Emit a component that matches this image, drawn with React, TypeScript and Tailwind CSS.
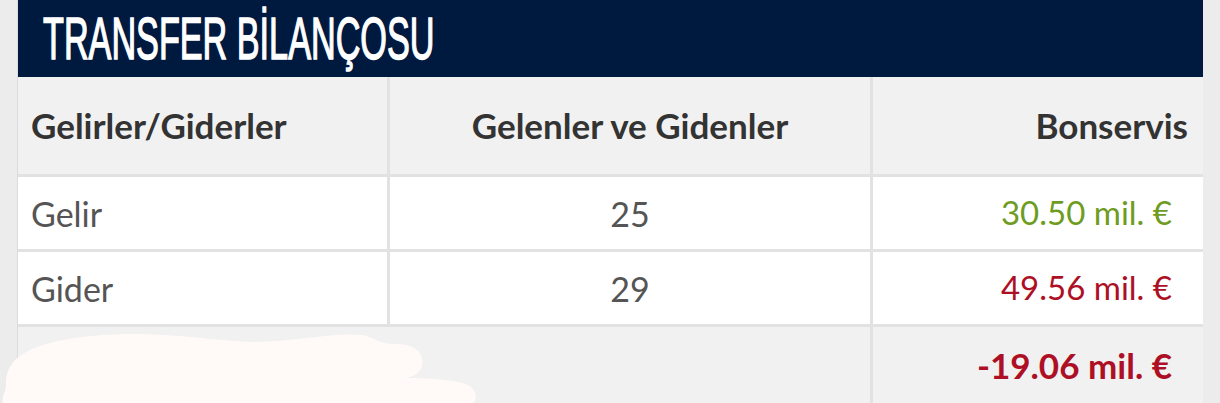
const rows = [
  { label: "Gelir", count: "25", fee: "30.50 mil. €", tone: "text-[#6e9c1f]" },
  { label: "Gider", count: "29", fee: "49.56 mil. €", tone: "text-[#ad1025]" },
];

const bodyFont = "[font-family:Lato,'Open_Sans',sans-serif]";

const Blot = () => (
  <svg
    className="pointer-events-none absolute bottom-0 left-[-17px]"
    width="490"
    height="75"
    viewBox="0 328 490 75"
  >
    <path
      d="M5,385 C4,352 40,338 120,334 C170,333 210,340 250,342 C300,341 335,332 362,335 C374,338 380,344 392,344 C412,343 424,352 421,366 C419,373 412,377 404,378 C430,378 462,380 470,387 C476,393 476,400 472,403 L2,403 C0,398 5,392 5,385 Z"
      fill="#fffaf7"
    />
  </svg>
);

export default function App() {
  return (
    <div className="h-[403px] w-[1220px] overflow-hidden bg-[#ececec] px-[17px]">
      <div className="relative h-full w-[1186px] border-l border-[#dcdcdc]">
        <div className="flex h-[77px] items-center bg-[#00193f] pl-[25px]">
          <h1 className="origin-left scale-x-[0.57] whitespace-nowrap text-[60px] font-normal leading-none text-white [-webkit-text-stroke:1.5px_white] [font-family:'Liberation_Sans',Arial,sans-serif]">
            TRANSFER BİLANÇOSU
          </h1>
        </div>

        <div
          className={`grid h-[326px] grid-cols-[369px_480px_1fr] grid-rows-[97px_72px_72px_1fr] gap-[3px] bg-[#e2e2e2] ${bodyFont}`}
        >
          <div className="flex items-center bg-[#f1f1f1] pl-[13px] text-[35px] font-bold text-[#333]">
            Gelirler/Giderler
          </div>
          <div className="flex items-center justify-center bg-[#f1f1f1] text-[35px] font-bold text-[#333]">
            Gelenler ve Gidenler
          </div>
          <div className="flex items-center justify-end bg-[#f1f1f1] pr-[15px] text-[35px] font-bold text-[#333]">
            Bonservis
          </div>

          {rows.map((r) => (
            <div key={r.label} className="contents">
              <div className="flex items-center bg-white pl-[13px] text-[34px] text-[#555]">
                {r.label}
              </div>
              <div className="flex items-center justify-center bg-white text-[34px] text-[#555]">
                {r.count}
              </div>
              <div className={`flex items-center justify-end bg-white pr-[31px] text-[33px] ${r.tone}`}>
                {r.fee}
              </div>
            </div>
          ))}

          <div className="col-span-2 bg-[#f1f1f1]" />
          <div className="flex items-center justify-end bg-[#f1f1f1] pr-[31px] text-[35px] font-bold text-[#ad1025]">
            -19.06 mil. €
          </div>
        </div>

        <Blot />
      </div>
    </div>
  );
}
